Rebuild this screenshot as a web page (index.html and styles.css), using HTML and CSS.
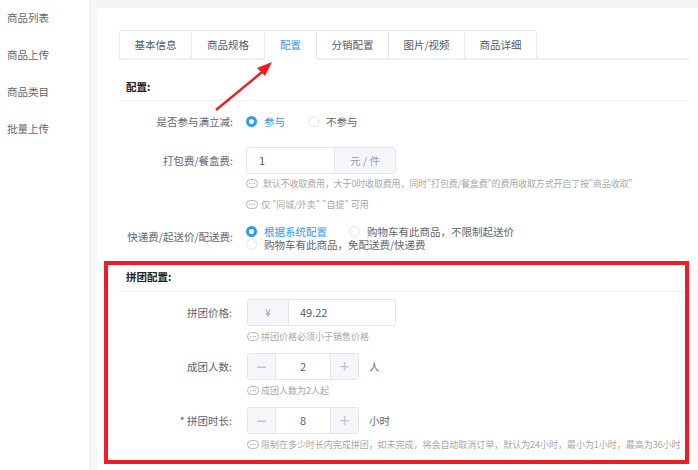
FILE: index.html
```html
<!DOCTYPE html>
<html lang="zh">
<head>
<meta charset="utf-8">
<title>配置</title>
<link rel="stylesheet" href="styles.css">
</head>
<body>
<svg width="0" height="0" class="defs">
  <symbol id="msg" viewBox="0 0 12 9">
    <rect x="0.5" y="0.5" width="11" height="8" rx="4" fill="none" stroke="#b4b4b4"/>
    <rect x="3" y="4" width="1.2" height="1.2" fill="#b4b4b4"/>
    <rect x="5.4" y="4" width="1.2" height="1.2" fill="#b4b4b4"/>
    <rect x="7.8" y="4" width="1.2" height="1.2" fill="#b4b4b4"/>
  </symbol>
</svg>
<div class="app">
  <aside class="side">
    <a>商品列表</a>
    <a>商品上传</a>
    <a>商品类目</a>
    <a>批量上传</a>
  </aside>
  <main class="main">
    <div class="card">
      <div class="tabs">
        <div class="tab t1">基本信息</div>
        <div class="tab t2">商品规格</div>
        <div class="tab t3 active">配置</div>
        <div class="tab t4">分销配置</div>
        <div class="tab t5">图片/视频</div>
        <div class="tab t6">商品详细</div>
      </div>
      <svg class="arrow" width="66" height="52" viewBox="0 0 66 52">
        <line x1="1" y1="49" x2="47" y2="11" stroke="#ee1c25" stroke-width="2.4"/>
        <polygon points="57,1 42,7 50,15" fill="#ee1c25"/>
      </svg>

      <h3 class="sec-title first">配置:</h3>
      <div class="row r-radio">
        <label class="lab">是否参与满立减:</label>
        <span class="radio on"></span><span class="rtext blue w-a">参与</span>
        <span class="radio"></span><span class="rtext">不参与</span>
      </div>
      <div class="row r-input">
        <label class="lab">打包费/餐盒费:</label>
        <div class="group">
          <span class="val val-pack">1</span>
          <span class="addon addon-r">元 / 件</span>
        </div>
      </div>
      <div class="hint h1"><svg class="ic"><use href="#msg"/></svg><span class="pad1">默认不收取费用，大于0时收取费用，同时"打包费/餐盒费"的费用收取方式开启了按"商品收取"</span></div>
      <div class="hint h2"><svg class="ic"><use href="#msg"/></svg>仅 "同城/外卖" "自提" 可用</div>
      <div class="row r-multi">
        <label class="lab">快递费/起送价/配送费:</label>
        <div class="rlines">
          <div class="rline"><span class="radio on"></span><span class="rtext blue w-b">根据系统配置</span><span class="radio"></span><span class="rtext">购物车有此商品，不限制起送价</span></div>
          <div class="rline"><span class="radio"></span><span class="rtext">购物车有此商品，免配送费/快递费</span></div>
        </div>
      </div>

      <section class="box">
        <h3 class="sec-title inbox">拼团配置:</h3>
        <div class="row r-f1">
          <label class="lab lab-b">拼团价格:</label>
          <div class="group g2">
            <span class="addon addon-l">¥</span>
            <span class="val val-price">49.22</span>
          </div>
        </div>
        <div class="hint hb"><svg class="ic"><use href="#msg"/></svg>拼团价格必须小于销售价格</div>
        <div class="row r-f2">
          <label class="lab lab-b">成团人数:</label>
          <div class="stepper"><span class="st-btn">−</span><span class="st-val">2</span><span class="st-btn">+</span></div>
          <span class="unit">人</span>
        </div>
        <div class="hint hb"><svg class="ic"><use href="#msg"/></svg>成团人数为2人起</div>
        <div class="row r-f2">
          <label class="lab lab-b">* 拼团时长:</label>
          <div class="stepper"><span class="st-btn">−</span><span class="st-val">8</span><span class="st-btn">+</span></div>
          <span class="unit">小时</span>
        </div>
        <div class="hint hb hb-long"><svg class="ic"><use href="#msg"/></svg>限制在多少时长内完成拼团，如未完成，将会自动取消订单，默认为24小时，最小为1小时，最高为36小时</div>
      </section>
    </div>
  </main>
</div>
</body>
</html>
```

FILE: styles.css
```css
* { box-sizing: border-box; }
html, body { margin: 0; height: 100%; overflow: hidden; background: #fff; }
body { font-family: "Noto Sans CJK SC", "Liberation Sans", sans-serif; font-size: 10.5px; color: #515a6e; }
.defs { position: absolute; }
.app { display: flex; height: 470px; }
.side { width: 90px; flex: none; border-right: 1px solid #eeeeee; display: flex; flex-direction: column; background: #fff; }
.side a { height: 37px; line-height: 35px; padding-left: 7px; color: #666; }
.main { flex: 1; background: #f5f5f5; padding: 8px 0 0 7px; }
.card { position: relative; background: #fff; height: 100%; padding: 22px 9px 0 22px; border-radius: 3px 0 0 0; }

.tabs { display: flex; height: 30px; border-bottom: 2px solid #eef0f5; }
.tab { height: 30px; line-height: 28px; text-align: center; color: #515a6e; background: #fff; border: 1px solid #e6e8f0; border-left: 0; border-bottom: 2px solid #eef0f5; }
.t1 { width: 73px; border-left: 1px solid #e6e8f0; border-radius: 3px 0 0 0; }
.t2 { width: 73px; }
.t3 { width: 52px; border-bottom-color: #fff; }
.t4 { width: 72px; }
.t5 { width: 76px; }
.t6 { width: 72px; border-radius: 0 3px 0 0; }
.active { color: #2d9cf4; }

.arrow { position: absolute; left: 118px; top: 53px; }

.sec-title { margin: 0; font-size: 10.5px; font-weight: 700; color: #222; border-bottom: 1px solid #f1f2f6; padding-left: 7px; }
.first { height: 41px; line-height: 54px; }
.inbox { height: 27px; line-height: 24px; margin-left: 11px; }

.row { display: flex; align-items: center; }
.lab { width: 114px; flex: none; text-align: right; margin-right: 13px; color: #5f6470; white-space: nowrap; }
.r-radio { height: 18px; margin-top: 11px; }
.r-input { height: 27px; margin-top: 17px; }
.radio { width: 11px; height: 11px; flex: none; border-radius: 50%; border: 1px solid #dfe2ea; background: #fff; }
.radio.on { border: 3px solid #2d9cf4; }
.rtext { margin-left: 7px; white-space: nowrap; color: #5f6470; line-height: 13px; }
.blue { color: #2d9cf4; }
.w-a { width: 44px; flex: none; }
.w-b { width: 78px; flex: none; margin-right: 7px; }

.group { display: flex; height: 27px; border: 1px solid #e3e6ee; border-radius: 3px; width: 150px; }
.val { color: #515a6e; line-height: 25px; }
.val-pack { width: 88px; padding-left: 12px; border-right: 1px solid #e3e6ee; font-size: 11px; }
.addon { background: #f5f6fa; color: #9a9fa9; text-align: center; line-height: 25px; }
.addon-r { flex: 1; }
.addon-l { width: 41px; border-right: 1px solid #e3e6ee; }
.val-price { padding-left: 11px; font-size: 11px; }
.g2 { width: 149px; }

.hint { display: flex; align-items: center; height: 13px; font-size: 9px; color: #a8a8a8; white-space: nowrap; padding-left: 127px; }
.ic { width: 12px; height: 9px; flex: none; margin-right: 3px; }
.pad1 { margin-left: 2px; letter-spacing: -0.16px; }
.h1 { margin-top: 3px; }
.h2 { margin-top: 8px; }

.r-multi { margin-top: 14px; height: 26px; }
.r-multi .lab { margin-bottom: 3px; }
.rline { display: flex; align-items: center; height: 13px; }

.box { margin: 10px 0 0 -15px; height: 203px; border: 4px solid #ee1c25; }
.r-f1 { height: 27px; margin-top: 7px; }
.r-f2 { height: 27px; margin-top: 10px; }
.row .lab-b { width: 124px; margin-right: 15px; }
.hb { padding-left: 139px; margin-top: 4px; }
.hb .ic { margin-right: 2px; }
.hb-long { letter-spacing: -0.03px; }

.stepper { display: flex; width: 112px; height: 27px; border: 1px solid #e3e6ee; border-radius: 3px; }
.st-btn { width: 27px; flex: none; background: #f5f6fa; color: #c2c5cd; text-align: center; font-family: "Liberation Sans", sans-serif; font-size: 18px; line-height: 27px; }
.st-val { flex: 1; text-align: center; border-left: 1px solid #e3e6ee; border-right: 1px solid #e3e6ee; line-height: 25px; font-size: 11px; }
.unit { margin-left: 10px; color: #5f6470; }
```
